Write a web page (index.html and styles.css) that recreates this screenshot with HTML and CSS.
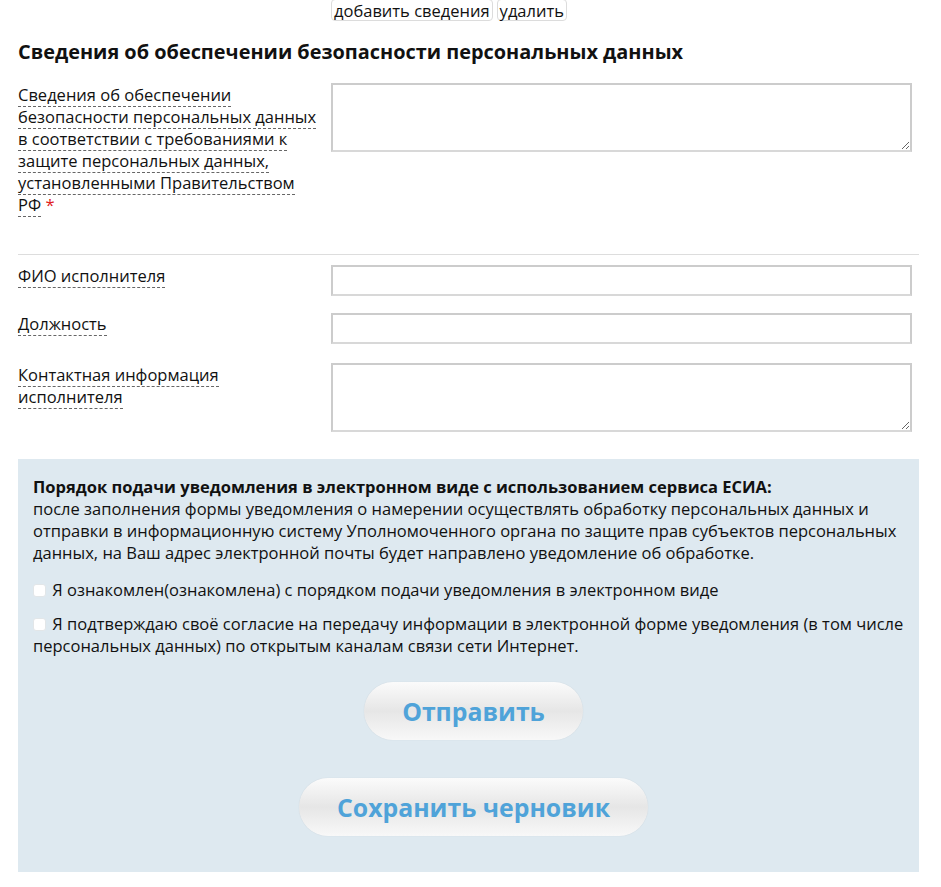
FILE: index.html
```html
<!DOCTYPE html>
<html lang="ru">
<head>
  <meta charset="UTF-8" />
  <title>Уведомление об обработке персональных данных</title>
  <link rel="stylesheet" href="styles.css">
</head>
<body>
  <div class="page">

    <!-- кнопки добавления сведений -->
    <div class="item-actions">
      <button type="button" class="small-btn">добавить сведения</button>
      <button type="button" class="small-btn">удалить</button>
    </div>

    <h3 class="section-title">Сведения об обеспечении безопасности персональных данных</h3>

    <div class="form-row">
      <label class="field-label">
        <span class="hint">Сведения об обеспечении безопасности персональных данных в соответствии с требованиями к защите персональных данных, установленными Правительством РФ</span>
        <span class="required">*</span>
      </label>
      <textarea class="field-area"></textarea>
    </div>

    <hr class="divider">

    <div class="form-row short">
      <label class="field-label"><span class="hint">ФИО исполнителя</span></label>
      <input type="text" class="field-input">
    </div>

    <div class="form-row short last">
      <label class="field-label"><span class="hint">Должность</span></label>
      <input type="text" class="field-input">
    </div>

    <div class="form-row">
      <label class="field-label"><span class="hint">Контактная информация исполнителя</span></label>
      <textarea class="field-area"></textarea>
    </div>

    <!-- блок отправки -->
    <div class="submit-box">
      <p class="submit-info">
        <b>Порядок подачи уведомления в электронном виде с использованием сервиса ЕСИА:</b><br>
        после заполнения формы уведомления о намерении осуществлять обработку персональных данных и отправки в информационную систему Уполномоченного органа по защите прав субъектов персональных данных, на Ваш адрес электронной почты будет направлено уведомление об обработке.
      </p>

      <label class="agree">
        <input type="checkbox">
        Я ознакомлен(ознакомлена) с порядком подачи уведомления в электронном виде
      </label>
      <label class="agree">
        <input type="checkbox">
        Я подтверждаю своё согласие на передачу информации в электронной форме уведомления (в том числе персональных данных) по открытым каналам связи сети Интернет.
      </label>

      <div class="big-buttons">
        <button type="button" class="big-btn">Отправить</button>
        <button type="button" class="big-btn">Сохранить черновик</button>
      </div>
    </div>

  </div>
</body>
</html>
```

FILE: styles.css
```css
* {
  box-sizing: border-box;
}

body {
  margin: 0;
  font-family: 'Open Sans', sans-serif;
  font-size: 16.5px;
  line-height: 22px;
  color: #111;
  background: #fff;
}

.page {
  width: 901px;
  margin-left: 18px;
  padding-bottom: 14px;
}

.item-actions {
  padding-left: 313px;
  display: flex;
  gap: 4px;
  margin-top: -1px;
}

.small-btn {
  font-family: 'Open Sans', sans-serif;
  font-size: 16.5px;
  line-height: 19px;
  color: #111;
  background: #fff;
  border: 1px solid #dcdcdc;
  border-radius: 4px;
  padding: 1px 2px 0;
}

.section-title {
  font-size: 19.9px;
  font-weight: bold;
  line-height: 24px;
  margin: 19px 0 19px;
}

.form-row {
  display: grid;
  grid-template-columns: 313px 581px;
  margin-bottom: 18px;
}

.form-row.short {
  margin-bottom: 17px;
}

.form-row.short.last {
  margin-bottom: 19px;
}

.field-label {
  padding-top: 1px;
  padding-right: 11px;
}

.form-row.short .field-label {
  padding-top: 0;
}

.hint {
  border-bottom: 1px dashed #666;
}

.required {
  color: #e02020;
}

.field-area {
  display: block;
  width: 581px;
  height: 69px;
  border: 2px solid #ccc;
  border-bottom-color: #d8d8d8;
  background: #fff;
  font-family: 'Open Sans', sans-serif;
  font-size: 14px;
}

.field-input {
  display: block;
  width: 581px;
  height: 31px;
  border: 2px solid #ccc;
  border-bottom-color: #d8d8d8;
  background: #fff;
  font-family: 'Open Sans', sans-serif;
  font-size: 14px;
}

.divider {
  border: 0;
  border-top: 1px solid #ddd;
  margin: 38px 0 10px;
}

.submit-box {
  background: #dee9f0;
  margin-top: 27px;
  padding: 17px 5px 36px 15px;
}

.submit-info {
  margin: 0 0 15px;
  padding-right: 10px;
}

.agree {
  display: block;
  margin-bottom: 12px;
}

.agree input {
  appearance: none;
  width: 13px;
  height: 13px;
  margin: 0 2px 0 0;
  vertical-align: -1px;
  background: #fff;
  border: 1px solid #e2e6e8;
  border-radius: 3px;
}

.big-buttons {
  display: flex;
  flex-direction: column;
  align-items: center;
  gap: 38px;
  margin-top: 25px;
}

.big-btn {
  height: 58px;
  padding: 0 38px;
  border: 0;
  border-radius: 29px;
  background: linear-gradient(to bottom, #fbfbfb 0%, #e6e6e6 50%, #f8f8f8 100%);
  box-shadow: 0 0 1px rgba(0, 0, 0, 0.15);
  font-family: 'Open Sans', sans-serif;
  font-size: 24.8px;
  font-weight: bold;
  color: #4fa3d9;
  cursor: pointer;
}
```
